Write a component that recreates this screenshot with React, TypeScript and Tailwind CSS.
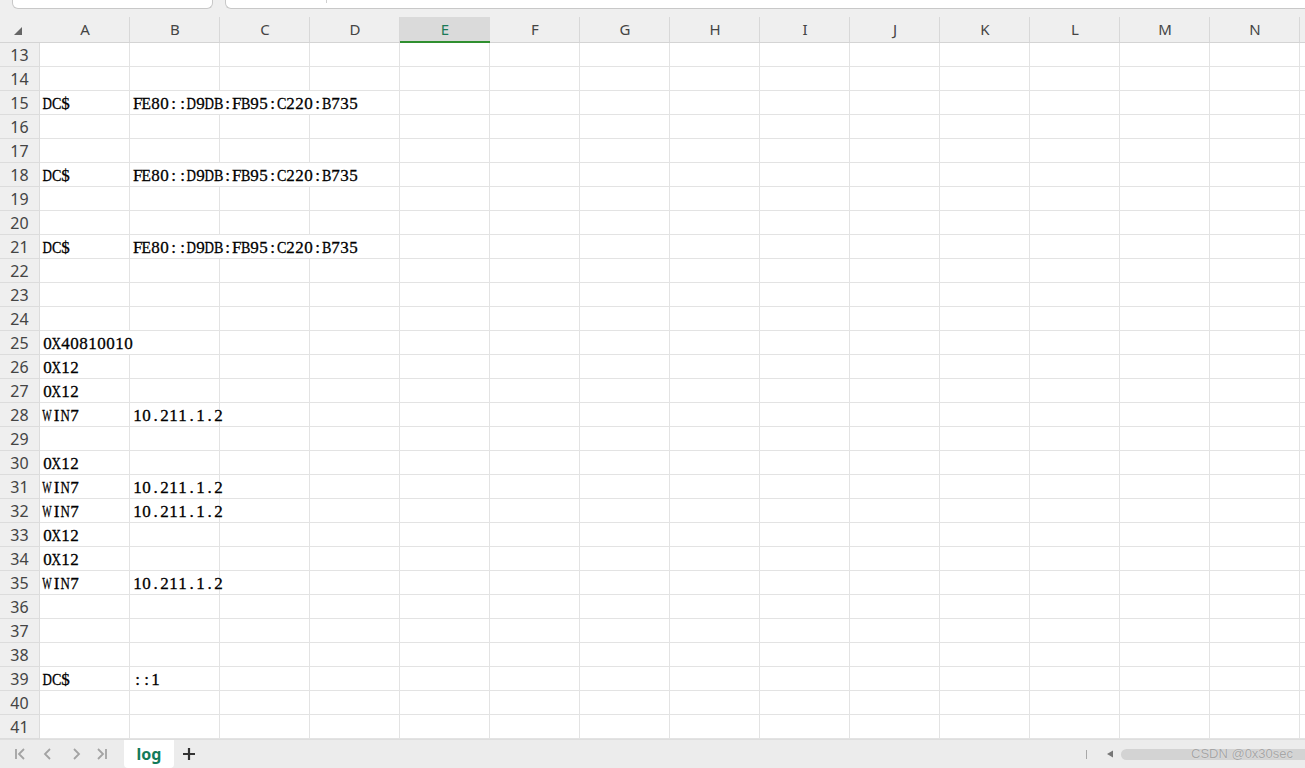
import React from "react";

const COLS = ["A","B","C","D","E","F","G","H","I","J","K","L","M","N",""];

type RowData = { n: number; a?: string; b?: string; aSpan?: number; bSpan?: number };

const rows: RowData[] = [];
const data: Record<number, { a?: string; b?: string; aSpan?: number; bSpan?: number }> = {
  15: { a: "DC$", b: "FE80::D9DB:FB95:C220:B735", bSpan: 3 },
  18: { a: "DC$", b: "FE80::D9DB:FB95:C220:B735", bSpan: 3 },
  21: { a: "DC$", b: "FE80::D9DB:FB95:C220:B735", bSpan: 3 },
  25: { a: "0X40810010", aSpan: 2 },
  26: { a: "0X12" },
  27: { a: "0X12" },
  28: { a: "WIN7", b: "10.211.1.2" },
  30: { a: "0X12" },
  31: { a: "WIN7", b: "10.211.1.2" },
  32: { a: "WIN7", b: "10.211.1.2" },
  33: { a: "0X12" },
  34: { a: "0X12" },
  35: { a: "WIN7", b: "10.211.1.2" },
  39: { a: "DC$", b: "::1" },
};
for (let n = 13; n <= 41; n++) rows.push({ n, ...data[n] });

// approximate Times glyph advance widths (em)
const W: Record<string, number> = {
  D: 0.722, C: 0.667, F: 0.556, E: 0.611, B: 0.667, X: 0.722, W: 0.944, I: 0.333, N: 0.722,
  $: 0.5, ":": 0.278, ".": 0.25,
};
const FS = 17;

function CellText({ text }: { text: string }) {
  return (
    <span
      className="inline-flex text-[17px] leading-[20px] text-[#000] whitespace-nowrap [-webkit-text-stroke:0.3px_#000]"
      style={{ fontFamily: '"Liberation Serif", "Noto Sans CJK SC", serif' }}
    >
      {text.split("").map((ch, i) => {
        const w = (W[ch] ?? 0.5) * FS;
        const s = Math.min(1, 9.4 / w);
        return (
          <span key={i} className="w-[9px] flex justify-center overflow-visible">
            <span className="inline-block" style={{ transform: `scaleX(${s})` }}>{ch}</span>
          </span>
        );
      })}
    </span>
  );
}

function Row({ r }: { r: RowData }) {
  const cells: React.ReactNode[] = [];
  let c = 0;
  while (c < COLS.length) {
    if (c === 0 && r.a) {
      const span = r.aSpan ?? 1;
      cells.push(
        <div key={c} className="h-6 border-r border-b border-[#e3e3e3] pl-[3px] flex items-end overflow-visible" style={{ gridColumn: `span ${span}` }}>
          <CellText text={r.a} />
        </div>
      );
      c += span;
      continue;
    }
    if (c === 1 && r.b) {
      const span = r.bSpan ?? 1;
      cells.push(
        <div key={c} className="h-6 border-r border-b border-[#e3e3e3] pl-[3px] flex items-end" style={{ gridColumn: `span ${span}` }}>
          <CellText text={r.b} />
        </div>
      );
      c += span;
      continue;
    }
    cells.push(<div key={c} className="h-6 border-r border-b border-[#e3e3e3]" />);
    c++;
  }
  return (
    <>
      <div className="h-6 border-r border-b border-[#dcdcdc] bg-[#efefef] flex items-center justify-center text-[16px] text-[#444]" style={{ fontFamily: '"Noto Sans", sans-serif' }}>{r.n}</div>
      {cells}
    </>
  );
}

export default function App() {
  return (
    <div className="w-[1305px] h-[768px] overflow-hidden bg-white flex flex-col select-none" style={{ fontFamily: '"Noto Sans", sans-serif' }}>
      {/* top formula strip */}
      <div className="h-[17px] bg-[#efefef] flex shrink-0">
        <div className="ml-[12px] w-[201px] h-[9px] bg-white border border-t-0 border-[#c8c8c8] rounded-b-[6px]" />
        <div className="ml-[12px] flex-1 h-[9px] bg-white border border-t-0 border-r-0 border-[#c8c8c8] rounded-bl-[6px] flex">
          <div className="ml-[100px] w-px h-[3px] bg-[#d0d0d0]" />
        </div>
      </div>

      {/* grid */}
      <div className="grid grid-cols-[40px_repeat(15,90px)] shrink-0">
        {/* header */}
        <div className="h-[26px] bg-[#efefef] border-b border-[#d4d4d4] flex items-center justify-center">
          <svg width="8" height="8" viewBox="0 0 8 8" className="mt-[2px] -ml-[4px]">
            <polygon points="8,0 8,8 0,8" fill="#666" />
          </svg>
        </div>
        {COLS.map((c, i) =>
          c === "E" ? (
            <div key={i} className="h-[26px] bg-[#dadada] border-b-2 border-[#2f8f2f] flex items-center justify-center text-[15px] text-[#1b7a57]">{c}</div>
          ) : (
            <div key={i} className="h-[26px] bg-[#efefef] border-b border-[#d4d4d4] flex items-center justify-center text-[15px] text-[#444] relative">
              {c}
              <div className="absolute right-0 top-0 h-[25px] w-px bg-[#d8d8d8]" />
            </div>
          )
        )}
        {rows.map((r) => (
          <Row key={r.n} r={r} />
        ))}
      </div>

      {/* bottom sheet bar */}
      <div className="flex-1 bg-[#ececec] border-t border-[#dedede] flex items-stretch relative">
        <div className="flex items-center h-full pl-[12px] gap-[10px]">
          <svg width="16" height="16" viewBox="0 0 16 16" fill="none" stroke="#a3a3a3" strokeWidth="1.8">
            <path d="M4 3v10M12 3l-5 5 5 5" />
          </svg>
          <svg width="16" height="16" viewBox="0 0 16 16" fill="none" stroke="#a3a3a3" strokeWidth="1.8" className="ml-[2px]">
            <path d="M10 3l-5 5 5 5" />
          </svg>
          <svg width="16" height="16" viewBox="0 0 16 16" fill="none" stroke="#a3a3a3" strokeWidth="1.8" className="ml-[2px]">
            <path d="M6 3l5 5-5 5" />
          </svg>
          <svg width="16" height="16" viewBox="0 0 16 16" fill="none" stroke="#a3a3a3" strokeWidth="1.8">
            <path d="M4 3l5 5-5 5M12 3v10" />
          </svg>
        </div>
        <div className="ml-[14px] w-[50px] bg-white rounded-b-[4px] flex items-center justify-center text-[16px] font-bold text-[#127a5a]" style={{ fontFamily: '"Noto Sans", sans-serif' }}>
          log
        </div>
        <div className="ml-[8px] flex items-center">
          <svg width="14" height="14" viewBox="0 0 14 14" stroke="#333" strokeWidth="2.2">
            <path d="M7 1v12M1 7h12" />
          </svg>
        </div>
        <div className="flex-1" />
        <div className="flex items-center">
          <div className="w-px h-[9px] bg-[#a8a8a8] mr-[19px]" />
          <svg width="8" height="8" viewBox="0 0 8 8" className="mr-[7px]">
            <polygon points="7,0.5 7,7.5 1,4" fill="#777" />
          </svg>
          <div className="w-[184px] h-[11px] rounded-l-full bg-[#d3d3d3] relative">
            <span className="absolute left-[70px] top-[-3px] text-[13px] leading-[16px] text-[#a6a6a6] whitespace-nowrap" style={{ fontFamily: '"Liberation Sans", sans-serif', textShadow: "0 0 1px #f4f4f4" }}>
              CSDN @0x30sec
            </span>
          </div>
        </div>
      </div>
    </div>
  );
}
